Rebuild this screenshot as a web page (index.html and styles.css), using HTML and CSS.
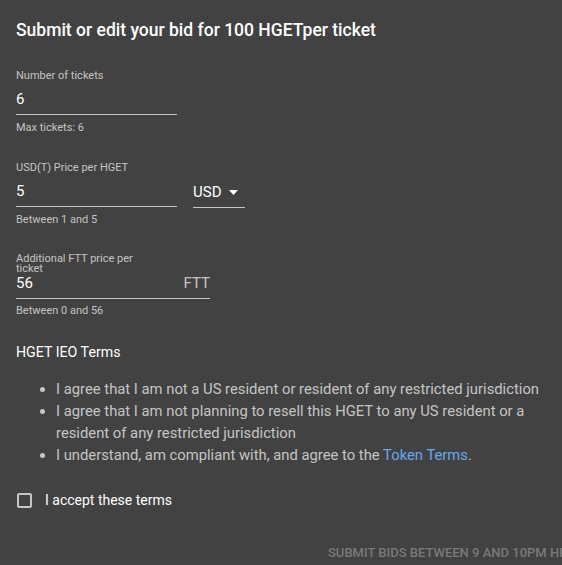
FILE: index.html
```html
<!DOCTYPE html>
<html>
<head>
<meta charset="utf-8">
<link rel="stylesheet" href="styles.css">
</head>
<body>
<div class="dialog">
  <h2 class="title">Submit or edit your bid for 100 HGETper ticket</h2>

  <div class="field f1">
    <div class="label">Number of tickets</div>
    <div class="input-row w161"><span class="value">6</span></div>
    <div class="helper h1">Max tickets: 6</div>
  </div>

  <div class="field f2">
    <div class="price-row">
      <div>
        <div class="label">USD(T) Price per HGET</div>
        <div class="input-row w161"><span class="value">5</span></div>
      </div>
      <div class="select">
        <span class="value">USD</span>
        <svg class="caret" width="9" height="5" viewBox="0 0 9 5"><path d="M0 0h9L4.5 5z" fill="#fff"/></svg>
      </div>
    </div>
    <div class="helper h2">Between 1 and 5</div>
  </div>

  <div class="field f3">
    <div class="label wrap">Additional FTT price per ticket</div>
    <div class="input-row w194 short"><span class="value">56</span><span class="adorn">FTT</span></div>
    <div class="helper">Between 0 and 56</div>
  </div>

  <h3 class="terms-title">HGET IEO Terms</h3>
  <ul class="terms">
    <li>I agree that I am not a US resident or resident of any restricted jurisdiction</li>
    <li>I agree that I am not planning to resell this HGET to any US resident or a resident of any restricted jurisdiction</li>
    <li>I understand, am compliant with, and agree to the <a href="#" class="link">Token Terms</a>.</li>
  </ul>

  <label class="check">
    <span class="box"></span>
    <span class="check-label">I accept these terms</span>
  </label>

  <div class="actions">
    <span class="btn">Submit bids between 9 and 10PM HKT</span>
  </div>
</div>
</body>
</html>
```

FILE: styles.css
```css
html, body {
  margin: 0;
  padding: 0;
  background: #424242;
  overflow: hidden;
  width: 562px;
  height: 565px;
}
body {
  font-family: Roboto, "Liberation Sans", sans-serif;
  color: #fff;
}
.dialog {
  padding: 0 16px;
}
.title {
  margin: 0;
  padding-top: 18px;
  font-size: 17.5px;
  font-weight: 500;
  line-height: 24px;
}
.field {
  display: flex;
  flex-direction: column;
}
.f1 { margin-top: 27px; }
.f2 { margin-top: 26px; }
.f3 { margin-top: 27px; }
.label {
  font-size: 11px;
  line-height: 14px;
  color: rgba(255,255,255,0.7);
}
.label.wrap {
  max-width: 130px;
  line-height: 10px;
}
.input-row {
  box-sizing: border-box;
  display: flex;
  align-items: flex-end;
  justify-content: space-between;
  height: 32px;
  padding-bottom: 6px;
  border-bottom: 1px solid rgba(255,255,255,0.7);
}
.input-row.short { height: 25px; }
.w161 { width: 161px; }
.w194 { width: 194px; }
.value {
  font-size: 15px;
  line-height: 17px;
  color: #fff;
}
.adorn {
  font-size: 15px;
  line-height: 17px;
  color: rgba(255,255,255,0.7);
}
.helper {
  margin-top: 5px;
  font-size: 11px;
  line-height: 14px;
  color: rgba(255,255,255,0.7);
}
.helper.h1 { margin-top: 6px; }
.helper.h2 { margin-top: 6px; }
.price-row {
  display: flex;
  align-items: flex-end;
}
.select {
  box-sizing: border-box;
  margin-left: 16px;
  margin-bottom: -1px;
  width: 52px;
  height: 33px;
  padding-bottom: 6px;
  display: flex;
  align-items: flex-end;
  border-bottom: 1px solid rgba(255,255,255,0.7);
}
.caret {
  margin-left: 8px;
  margin-bottom: 6px;
}
.terms-title {
  margin: 24px 0 0;
  font-size: 14.2px;
  font-weight: 400;
  line-height: 20px;
}
.terms {
  margin: 16px 0 0;
  padding-left: 40px;
  font-size: 14.8px;
  line-height: 22px;
  color: rgba(255,255,255,0.7);
}
.link {
  color: #64a8f0;
  text-decoration: none;
}
.check {
  display: flex;
  align-items: center;
  margin-top: 25px;
}
.box {
  width: 11px;
  height: 11px;
  margin-left: 1px;
  border: 2px solid rgba(255,255,255,0.7);
  border-radius: 2px;
}
.check-label {
  margin-left: 13px;
  font-size: 14px;
  line-height: 18px;
}
.actions {
  display: flex;
  margin-top: 35px;
  padding-left: 312px;
  white-space: nowrap;
}
.btn {
  font-size: 13px;
  font-weight: 500;
  text-transform: uppercase;
  color: rgba(255,255,255,0.3);
  line-height: 18px;
}
```
